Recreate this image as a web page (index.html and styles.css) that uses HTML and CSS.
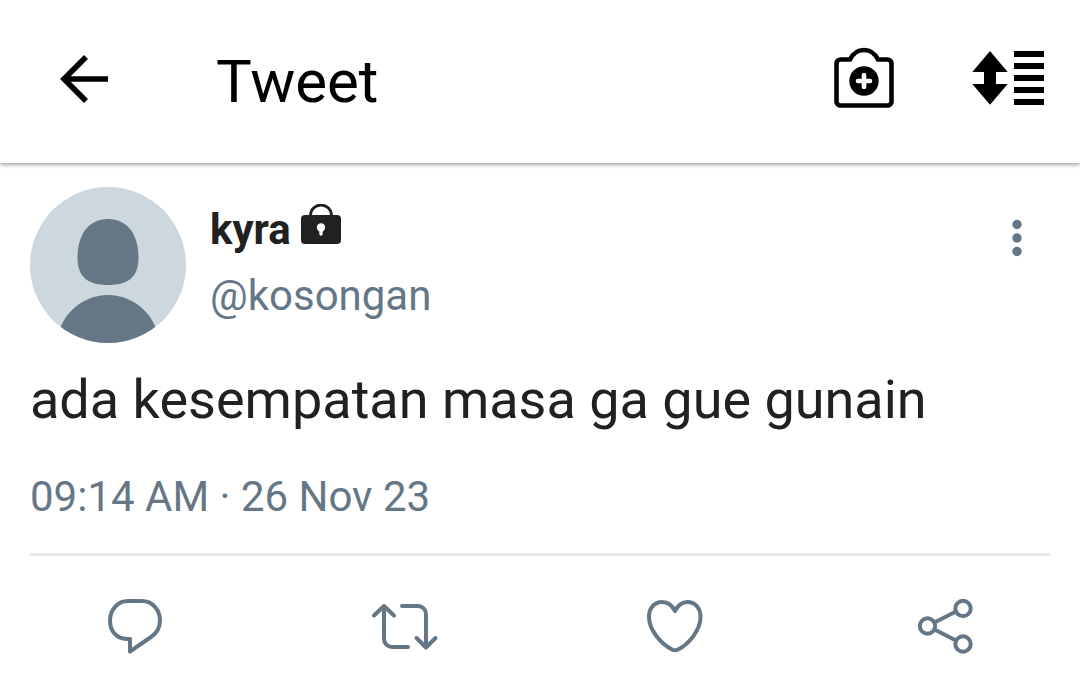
FILE: index.html
```html
<!DOCTYPE html>
<html lang="id">
<head>
    <meta charset="UTF-8">
    <meta name="viewport" content="width=device-width, initial-scale=1.0">
    <title>Tweet</title>
    <link rel="stylesheet" href="styles.css">
</head>
<body>

    <header class="navbar">
        <button class="icon-btn" aria-label="Back">
            <svg width="72" height="72" viewBox="0 0 72 72" fill="none" stroke="#000" stroke-width="5.6">
                <path d="M38 12L16 34l22 22M16 34h44"/>
            </svg>
        </button>
        <h1>Tweet</h1>
        <div class="navbar-actions">
            <button class="icon-btn" aria-label="Capture">
                <svg width="72" height="72" viewBox="0 0 72 72" fill="none">
                    <path d="M12.5 14.5H22C25 8.500 30 5 36 5s11 3.500 14 9.500h9.500a4 4 0 0 1 4 4v38a4 4 0 0 1-4 4h-47a4 4 0 0 1-4-4v-38a4 4 0 0 1 4-4z" stroke="#000" stroke-width="4.600"/>
                    <circle cx="36" cy="36" r="14.700" fill="#000"/>
                    <path d="M36 30v12M30 36h12" stroke="#fff" stroke-width="4.600" stroke-linecap="round"/>
                </svg>
            </button>
            <button class="icon-btn" aria-label="Scroll options">
                <svg width="72" height="72" viewBox="0 0 72 72" fill="#000">
                    <path d="M18 6l17.700 21H24v12h11.700L18 59.700.3 39H12V27H.3z"/>
                    <path d="M42 6h30v6H42zM42 18h30v6H42zM42 30h30v6H42zM42 42h30v6H42zM42 54h30v6H42z"/>
                </svg>
            </button>
        </div>
    </header>

    <main class="tweet">
        <div class="tweet-header">
            <svg class="avatar" width="156" height="156" viewBox="0 0 156 156">
                <defs>
                    <clipPath id="avatar-clip"><circle cx="78" cy="78" r="78"/></clipPath>
                </defs>
                <g clip-path="url(#avatar-clip)">
                    <rect width="156" height="156" fill="#ccd8dd"/>
                    <path d="M78 32c20 0 30.500 16 30.500 39 0 19-10.500 27-30.500 27s-30.500-8-30.500-27c0-23 10.500-39 30.500-39z" fill="#657786"/>
                    <circle cx="78" cy="159" r="51" fill="#657786"/>
                </g>
            </svg>
            <div class="user">
                <div class="name">kyra<svg class="lock" width="40" height="40" viewBox="0 0 40 40">
                    <path d="M9.500 12v-.5a10.500 10.500 0 0 1 21 0v.5" fill="none" stroke="#212121" stroke-width="2.800"/>
                    <rect y="11" width="40" height="29" rx="4" fill="#212121"/>
                    <circle cx="20" cy="23.500" r="4.200" fill="#fff"/>
                    <path d="M20 24v6" stroke="#fff" stroke-width="3.400" stroke-linecap="round"/>
                </svg></div>
                <div class="handle">@kosongan</div>
            </div>
            <button class="icon-btn more" aria-label="More">
                <svg width="66" height="66" viewBox="0 0 66 66" fill="#657786">
                    <circle cx="33" cy="19.500" r="4.700"/>
                    <circle cx="33" cy="33" r="4.700"/>
                    <circle cx="33" cy="46.500" r="4.700"/>
                </svg>
            </button>
        </div>
        <p class="tweet-text">ada kesempatan masa ga gue gunain</p>
        <div class="date">09:14 AM · 26 Nov 23</div>
    </main>

    <div class="actions">
        <button class="icon-btn" aria-label="Reply">
            <svg class="line-icon" width="72" height="72" viewBox="0 0 72 72">
                <path d="M29 11h14c10.500 0 18 9 18 19.500 0 7-3 12.500-9 16.500L31 61.500V49h-3C17.500 49 11 41 11 30.500S18.500 11 29 11z"/>
            </svg>
        </button>
        <button class="icon-btn" aria-label="Retweet">
            <svg class="line-icon" width="72" height="72" viewBox="0 0 72 72">
                <path d="M5 25.500L15 16l10 9.500M15 16v33a8 8 0 0 0 8 8h16M33 16h16a8 8 0 0 1 8 8v33M47.500 48L57 57.500l9.500-9.500"/>
            </svg>
        </button>
        <button class="icon-btn" aria-label="Like">
            <svg class="line-icon" width="72" height="72" viewBox="0 0 72 72">
                <path d="M36 21c-3-6-7.500-9-13-9-8 0-13 6.500-13 15 0 13 12 27 23 32.500q3 1.500 6 0C50 54 61.500 40 61.500 27c0-8.500-5-15-13-15-5.500 0-9.500 3-12.500 9z"/>
            </svg>
        </button>
        <button class="icon-btn" aria-label="Share">
            <svg class="line-icon" width="72" height="72" viewBox="0 0 72 72">
                <circle cx="18.500" cy="36" r="7.700"/>
                <circle cx="54" cy="18.500" r="7.700"/>
                <circle cx="54" cy="54" r="7.700"/>
                <path d="M25.500 32.500l21.500-11M25.500 39.500L47 50.500"/>
            </svg>
        </button>
    </div>

</body>
</html>
```
FILE: styles.css
```css
body {
    font-family: Roboto, "Liberation Sans", sans-serif;
    margin: 0;
    padding: 0;
    background-color: #fff;
    color: #212121;
}
.icon-btn {
    display: block;
    padding: 0;
    border: none;
    background: none;
    cursor: pointer;
}
.icon-btn svg {
    display: block;
}
.navbar {
    display: flex;
    align-items: flex-start;
    padding: 45px 36px 44px 48px;
    background-color: #fff;
    color: #000;
    box-shadow: 0 2px 4px rgba(0, 0, 0, 0.35);
}
.navbar h1 {
    flex: 1;
    margin: 0 0 0 96px;
    font-size: 60px;
    line-height: 74px;
    font-weight: 400;
}
.navbar-actions {
    display: flex;
    gap: 72px;
}
.tweet {
    margin: 0 30px;
    padding: 24px 0 26px;
    border-bottom: 3px solid #e9e9e9;
}
.tweet-header {
    display: flex;
    align-items: flex-start;
}
.avatar {
    flex-shrink: 0;
}
.user {
    flex: 1;
    padding-top: 10px;
    margin-left: 24px;
    font-size: 42px;
    line-height: 66px;
}
.name {
    font-weight: 700;
}
.lock {
    margin-left: 10px;
    vertical-align: baseline;
}
.handle,
.date {
    color: #657786;
}
.more {
    margin-top: 18px;
}
.tweet-text {
    margin: 21px 0 31px;
    font-size: 54px;
    line-height: 72px;
}
.date {
    font-size: 42px;
    line-height: 60px;
}
.actions {
    display: grid;
    grid-template-columns: repeat(4, 1fr);
    justify-items: center;
    padding: 34px 0 24px;
}
.line-icon {
    fill: none;
    stroke: #657786;
    stroke-width: 4;
    stroke-linecap: round;
    stroke-linejoin: round;
}
```
